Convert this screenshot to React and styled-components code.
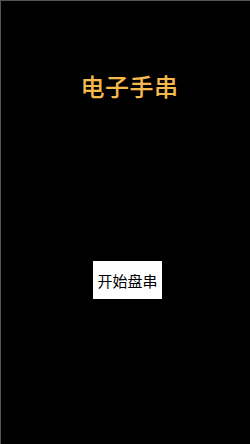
import React from "react";
import styled, { createGlobalStyle } from "styled-components";

const GlobalStyle = createGlobalStyle`
  html, body {
    margin: 0;
    padding: 0;
    background: #000;
  }
  #root {
    height: 444px;
  }
`;

const Page = styled.div`
  box-sizing: border-box;
  height: 444px;
  width: 250px;
  background: #000;
  border-top: 1px solid #555;
  border-left: 1px solid #555;
  display: flex;
  flex-direction: column;
  align-items: center;
  font-family: "Noto Sans CJK SC", "Noto Sans", sans-serif;
`;

const Title = styled.h1`
  margin: 68px 0 0 8px;
  font-size: 24px;
  line-height: 34px;
  font-weight: 500;
  color: #f5b94e;
  letter-spacing: 0.5px;
`;

const StartButton = styled.button`
  margin: 158px 0 0 4px;
  width: 69px;
  height: 38px;
  padding: 0;
  border: none;
  background: #fff;
  color: #000;
  font-family: inherit;
  font-size: 15px;
  font-weight: 400;
  cursor: pointer;
`;

export default function App() {
  return (
    <>
      <GlobalStyle />
      <Page>
        <Title>电子手串</Title>
        <StartButton>开始盘串</StartButton>
      </Page>
    </>
  );
}
